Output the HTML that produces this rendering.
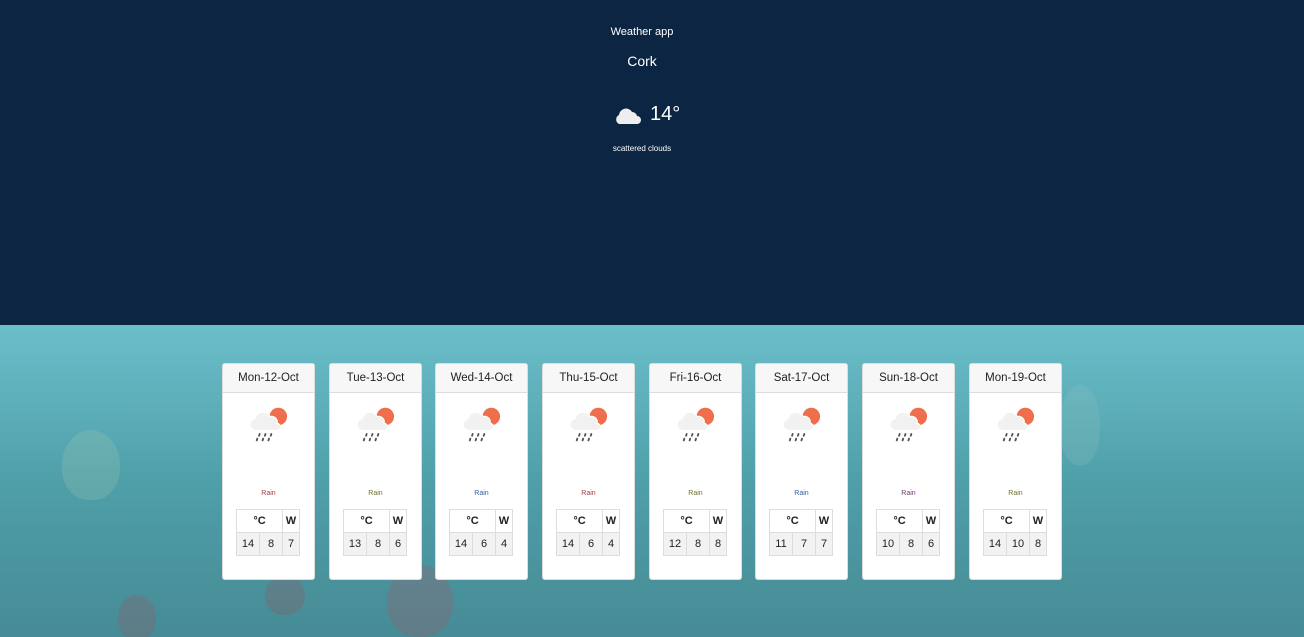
<!DOCTYPE html>
<html><head><style>
*{margin:0;padding:0;box-sizing:border-box}
html,body{width:1304px;height:637px;overflow:hidden}
body{font-family:"Liberation Sans",sans-serif;position:relative;background:#0b2542}
.top{position:absolute;left:0;top:0;width:1284px;height:325px;color:#fff;text-align:center}
.bot{position:absolute;left:0;top:325px;width:1304px;height:312px;background:linear-gradient(#6bbfca,#4f9fa9 50%,#468b95);overflow:hidden}
.b{position:absolute;border-radius:50% 50% 45% 45%;opacity:.25}
.card{position:absolute;top:363px;width:93px;height:217px;background:#fff;border:1px solid #ddd;border-radius:3px}
.hd{height:29px;background:#f7f7f7;border-bottom:1px solid #ddd;font-size:11.5px;color:#222;text-align:center;line-height:29px}
.ic{position:absolute;left:25px;top:42px}
.rain{position:absolute;top:126px;width:100%;text-align:center;font-size:7px}
table{position:absolute;left:13px;top:145px;border-collapse:collapse;font-size:11px;color:#222}
td{border:1px solid #ddd;text-align:center;height:23px;padding:0}
tr.h td{font-weight:bold;background:#fff}
tr.d td{background:#f2f2f2}
</style></head><body>
<div class="top">
<div style="position:absolute;top:26px;width:100%;font-size:11px">Weather app</div>
<div style="position:absolute;top:53px;width:100%;font-size:14px">Cork</div>
<svg style="position:absolute;left:614px;top:105px" width="28" height="20" viewBox="0 0 28 20"><path d="M5 19 A5 5 0 0 1 5 10 A7 7 0 0 1 18 7 A5 5 0 0 1 23 11 A4 4 0 0 1 23 19 Z" fill="#eee"/></svg>
<div style="position:absolute;left:650px;top:103px;font-size:20px">14°</div>
<div style="position:absolute;top:144px;width:100%;font-size:8px">scattered clouds</div>
</div>
<div class="bot">
<div class="b" style="left:62px;top:105px;width:58px;height:70px;background:#9fc8b0"></div>
<div class="b" style="left:118px;top:270px;width:38px;height:45px;background:#a0505a"></div>
<div class="b" style="left:265px;top:250px;width:40px;height:40px;background:#9a4a55"></div>
<div class="b" style="left:387px;top:240px;width:66px;height:72px;background:#b05060"></div>
<div class="b" style="left:1060px;top:60px;width:40px;height:80px;background:#8fc0c0"></div>
</div>
<div id="cards"></div>
<script>
var d=[["Mon-12-Oct",14,8,7,"#a04040"],["Tue-13-Oct",13,8,6,"#707030"],["Wed-14-Oct",14,6,4,"#3060a0"],["Thu-15-Oct",14,6,4,"#a04040"],["Fri-16-Oct",12,8,8,"#707030"],["Sat-17-Oct",11,7,7,"#3060a0"],["Sun-18-Oct",10,8,6,"#704070"],["Mon-19-Oct",14,10,8,"#707030"]];
var L=[222,329,435,542,649,755,862,969],h="";
d.forEach(function(c,i){h+='<div class="card" style="left:'+L[i]+'px"><div class="hd">'+c[0]+'</div>'+
'<svg class="ic" width="42" height="42" viewBox="0 0 36 36"><circle cx="26" cy="9" r="7.5" fill="#ef6f4d"/><path d="M4 20 A5 5 0 0 1 6 11 A7 7 0 0 1 19 9 A5 5 0 0 1 25 15 A3 3 0 0 1 25 21 L6 21 Z" fill="#f1f1f1" stroke="#fff" stroke-width="1"/><g stroke="#555" stroke-width="1.6" stroke-linecap="round"><path d="M10 24l-.5 1.5M15 24l-.5 1.5M20 24l-.5 1.5M8 28l-.5 1.5M13 28l-.5 1.5M18 28l-.5 1.5"/></g></svg>'+
'<div class="rain" style="color:'+c[4]+'">Rain</div><table><tr class="h"><td colspan="2" style="width:46px">°C</td><td style="width:17px">W</td></tr><tr class="d"><td style="width:23px">'+c[1]+'</td><td style="width:23px">'+c[2]+'</td><td>'+c[3]+'</td></tr></table></div>'});
document.getElementById("cards").innerHTML=h;
</script>
</body></html>
